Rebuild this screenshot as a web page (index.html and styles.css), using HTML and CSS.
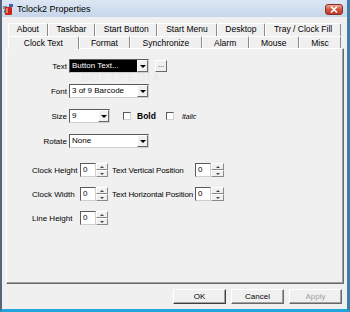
FILE: index.html
```html
<!DOCTYPE html>
<html lang="en">

<head>
    <meta charset="UTF-8">
    <title>Tclock2 Properties</title>
    <link rel="stylesheet" href="styles.css">
</head>

<body>

    <div class="window">
        <div class="titlebar">
            <svg class="app-icon" width="11" height="11" viewBox="0 0 11 11">
                <rect x="0" y="2" width="4" height="3" fill="#7c8aa3"/>
                <rect x="6" y="0" width="4" height="3" fill="#3d62b8"/>
                <rect x="2" y="3" width="7" height="8" rx="1" fill="#c8241b"/>
                <rect x="3" y="4" width="2" height="5" fill="#f07a5a"/>
                <rect x="1" y="6" width="2" height="3" fill="#5a6a86"/>
            </svg>
            <span class="title">Tclock2 Properties</span>
            <span class="close">
                <svg width="8" height="7" viewBox="0 0 8 7">
                    <path d="M1 0.5 L7 6.5 M7 0.5 L1 6.5" stroke="#fff" stroke-width="1.6"/>
                </svg>
            </span>
        </div>

        <div class="tabs">
            <div class="tab-row">
                <span class="tab">About</span>
                <span class="tab">Taskbar</span>
                <span class="tab">Start Button</span>
                <span class="tab">Start Menu</span>
                <span class="tab">Desktop</span>
                <span class="tab">Tray / Clock Fill</span>
            </div>
            <div class="tab-row front">
                <span class="tab active">Clock Text</span>
                <span class="tab">Format</span>
                <span class="tab">Synchronize</span>
                <span class="tab">Alarm</span>
                <span class="tab">Mouse</span>
                <span class="tab">Misc</span>
            </div>
        </div>

        <div class="panel">
            <div class="font-grid">
                <span class="field-label">Text</span>
                <div class="field-row">
                    <div class="combo wide selected">
                        <span class="combo-value">Button Text...</span>
                        <span class="drop"></span>
                    </div>
                    <span class="browse">...</span>
                </div>

                <span class="field-label">Font</span>
                <div class="field-row">
                    <div class="combo wide">
                        <span class="combo-value">3 of 9 Barcode</span>
                        <span class="drop"></span>
                    </div>
                </div>

                <span class="field-label">Size</span>
                <div class="field-row">
                    <div class="combo narrow">
                        <span class="combo-value">9</span>
                        <span class="drop"></span>
                    </div>
                    <span class="check first"></span>
                    <span class="bold-label">Bold</span>
                    <span class="check second"></span>
                    <span class="italic-label">Italic</span>
                </div>

                <span class="field-label">Rotate</span>
                <div class="field-row">
                    <div class="combo wide">
                        <span class="combo-value">None</span>
                        <span class="drop"></span>
                    </div>
                </div>
            </div>

            <div class="pos-grid">
                <span>Clock Height</span>
                <div class="spin"><span class="spin-edit">0</span><span class="spin-btns"><i class="up"></i><i class="down"></i></span></div>
                <span class="second-label">Text Vertical Position</span>
                <div class="spin"><span class="spin-edit">0</span><span class="spin-btns"><i class="up"></i><i class="down"></i></span></div>

                <span>Clock Width</span>
                <div class="spin"><span class="spin-edit">0</span><span class="spin-btns"><i class="up"></i><i class="down"></i></span></div>
                <span class="second-label">Text Horizontal Position</span>
                <div class="spin"><span class="spin-edit">0</span><span class="spin-btns"><i class="up"></i><i class="down"></i></span></div>

                <span>Line Height</span>
                <div class="spin"><span class="spin-edit">0</span><span class="spin-btns"><i class="up"></i><i class="down"></i></span></div>
            </div>

            <span class="watermark">SOFTPEDIA</span>
        </div>

        <div class="buttons">
            <span class="btn default">OK</span>
            <span class="btn">Cancel</span>
            <span class="btn disabled">Apply</span>
        </div>
    </div>

</body>

</html>
```

FILE: styles.css
```css
body {
    margin: 0;
    font-family: "Liberation Sans", Arial, sans-serif;
    font-size: 8px;
    color: #000;
}

.window {
    width: 350px;
    height: 312px;
    box-sizing: border-box;
    display: flex;
    flex-direction: column;
    background-color: #f0f0f0;
    border-left: 2px solid #56657a;
    border-right: 3px solid #3f7ea8;
    border-bottom: 3px solid #22a5da;
    white-space: nowrap;
}

/* title bar */
.titlebar {
    height: 17px;
    flex-shrink: 0;
    display: flex;
    align-items: center;
    background: linear-gradient(#dde7f4, #c6d6ea);
}

.app-icon {
    margin-left: 1px;
    margin-top: 1px;
}

.title {
    margin-left: 3px;
    font-size: 9px;
    margin-top: 1px;
}

.close {
    margin-left: auto;
    margin-right: 4px;
    margin-top: 1px;
    width: 18px;
    height: 11px;
    box-sizing: border-box;
    border: 1px solid #8b2f22;
    border-radius: 3px;
    background: linear-gradient(#eba594, #d4553f 50%, #c0392b);
    display: flex;
    align-items: center;
    justify-content: center;
}

.close svg {
    display: block;
}

/* tabs */
.tabs {
    margin: 6px 6px 0 6px;
    position: relative;
    z-index: 1;
}

.tab-row {
    display: flex;
    height: 13px;
}

.tab-row.front {
    height: 12px;
}

.tab {
    flex: 1 1 auto;
    box-sizing: border-box;
    text-align: center;
    line-height: 11px;
    font-size: 8.5px;
    border-left: 1px solid #fff;
    border-top: 1px solid #fff;
    border-right: 1px solid #8a8a8a;
    border-top-left-radius: 2px;
    border-top-right-radius: 2px;
    background-color: #f0f0f0;
}

.tab-row.front .tab {
    line-height: 12px;
}

.tab.active {
    flex-grow: 1.3;
    height: 13px;
    position: relative;
    z-index: 2;
}

/* panel */
.panel {
    position: relative;
    height: 236px;
    flex-shrink: 0;
    box-sizing: border-box;
    margin: 0 3px 0 4px;
    border: 1px solid;
    border-color: #fff #6a6a6a #6a6a6a #fff;
    box-shadow: inset -1px -1px #a0a0a0;
}

.font-grid {
    display: grid;
    grid-template-columns: 60px auto;
    grid-auto-rows: 14px;
    column-gap: 2px;
    row-gap: 11px;
    padding-top: 10px;
    align-items: center;
}

.field-label {
    text-align: right;
}

.field-row {
    display: flex;
    align-items: center;
    height: 14px;
}

.combo {
    height: 14px;
    box-sizing: border-box;
    display: flex;
    background-color: #fff;
    border: 1px solid;
    border-color: #5a5a5a #d0d0d0 #d0d0d0 #5a5a5a;
}

.combo.wide {
    width: 80px;
}

.combo.narrow {
    width: 41px;
}

.combo-value {
    flex: 1;
    padding-left: 2px;
    line-height: 12px;
    overflow: hidden;
}

.combo.selected .combo-value {
    background-color: #000;
    color: #fff;
}

.drop {
    width: 11px;
    box-sizing: border-box;
    border: 1px solid;
    border-color: #fff #696969 #696969 #fff;
    background-color: #f0f0f0;
    display: flex;
    align-items: center;
    justify-content: center;
}

.drop::after {
    content: "";
    border-left: 3px solid transparent;
    border-right: 3px solid transparent;
    border-top: 3px solid #000;
}

.browse {
    margin-left: 6px;
    width: 12px;
    height: 12px;
    box-sizing: border-box;
    border: 1px solid;
    border-color: #fff #696969 #696969 #fff;
    text-align: center;
    line-height: 8px;
    color: #333;
}

.check {
    width: 8px;
    height: 8px;
    box-sizing: border-box;
    background-color: #fff;
    border: 1px solid;
    border-color: #5a5a5a #d0d0d0 #d0d0d0 #5a5a5a;
}

.check.first {
    margin-left: 13px;
}

.check.second {
    margin-left: 10px;
}

.bold-label {
    margin-left: 6px;
    font-weight: bold;
    font-size: 8.5px;
}

.italic-label {
    margin-left: 8px;
    font-style: italic;
    font-size: 7px;
}

.pos-grid {
    display: grid;
    grid-template-columns: 46px 28px 83px 29px;
    grid-auto-rows: 14px;
    column-gap: 2px;
    row-gap: 10px;
    margin-top: 15px;
    padding-left: 25px;
    align-items: center;
}

.second-label {
    padding-left: 2px;
    letter-spacing: -0.1px;
}

.spin {
    display: flex;
    height: 14px;
}

.spin-edit {
    width: 16px;
    box-sizing: border-box;
    background-color: #fff;
    border: 1px solid;
    border-color: #5a5a5a #d0d0d0 #d0d0d0 #5a5a5a;
    padding-left: 2px;
    line-height: 12px;
}

.spin-btns {
    flex: 1;
    display: flex;
    flex-direction: column;
}

.spin-btns i {
    flex: 1;
    box-sizing: border-box;
    border: 1px solid;
    border-color: #fff #8a8a8a #8a8a8a #fff;
    display: flex;
    align-items: center;
    justify-content: center;
}

.spin-btns .up::after {
    content: "";
    border-left: 2px solid transparent;
    border-right: 2px solid transparent;
    border-bottom: 2px solid #444;
}

.spin-btns .down::after {
    content: "";
    border-left: 2px solid transparent;
    border-right: 2px solid transparent;
    border-top: 2px solid #444;
}

.watermark {
    position: absolute;
    left: 74px;
    top: 22px;
    font-size: 11px;
    letter-spacing: 2px;
    color: #e8e8e8;
}

/* bottom buttons */
.buttons {
    display: flex;
    justify-content: flex-end;
    gap: 5px;
    margin-top: 5px;
    padding-right: 5px;
}

.btn {
    width: 53px;
    height: 15px;
    box-sizing: border-box;
    border: 1px solid;
    border-color: #fff #696969 #696969 #fff;
    box-shadow: inset -1px -1px #a0a0a0;
    text-align: center;
    line-height: 13px;
}

.btn.default {
    border-color: #fff #404040 #404040 #fff;
}

.btn.disabled {
    color: #a0a0a0;
}
```
